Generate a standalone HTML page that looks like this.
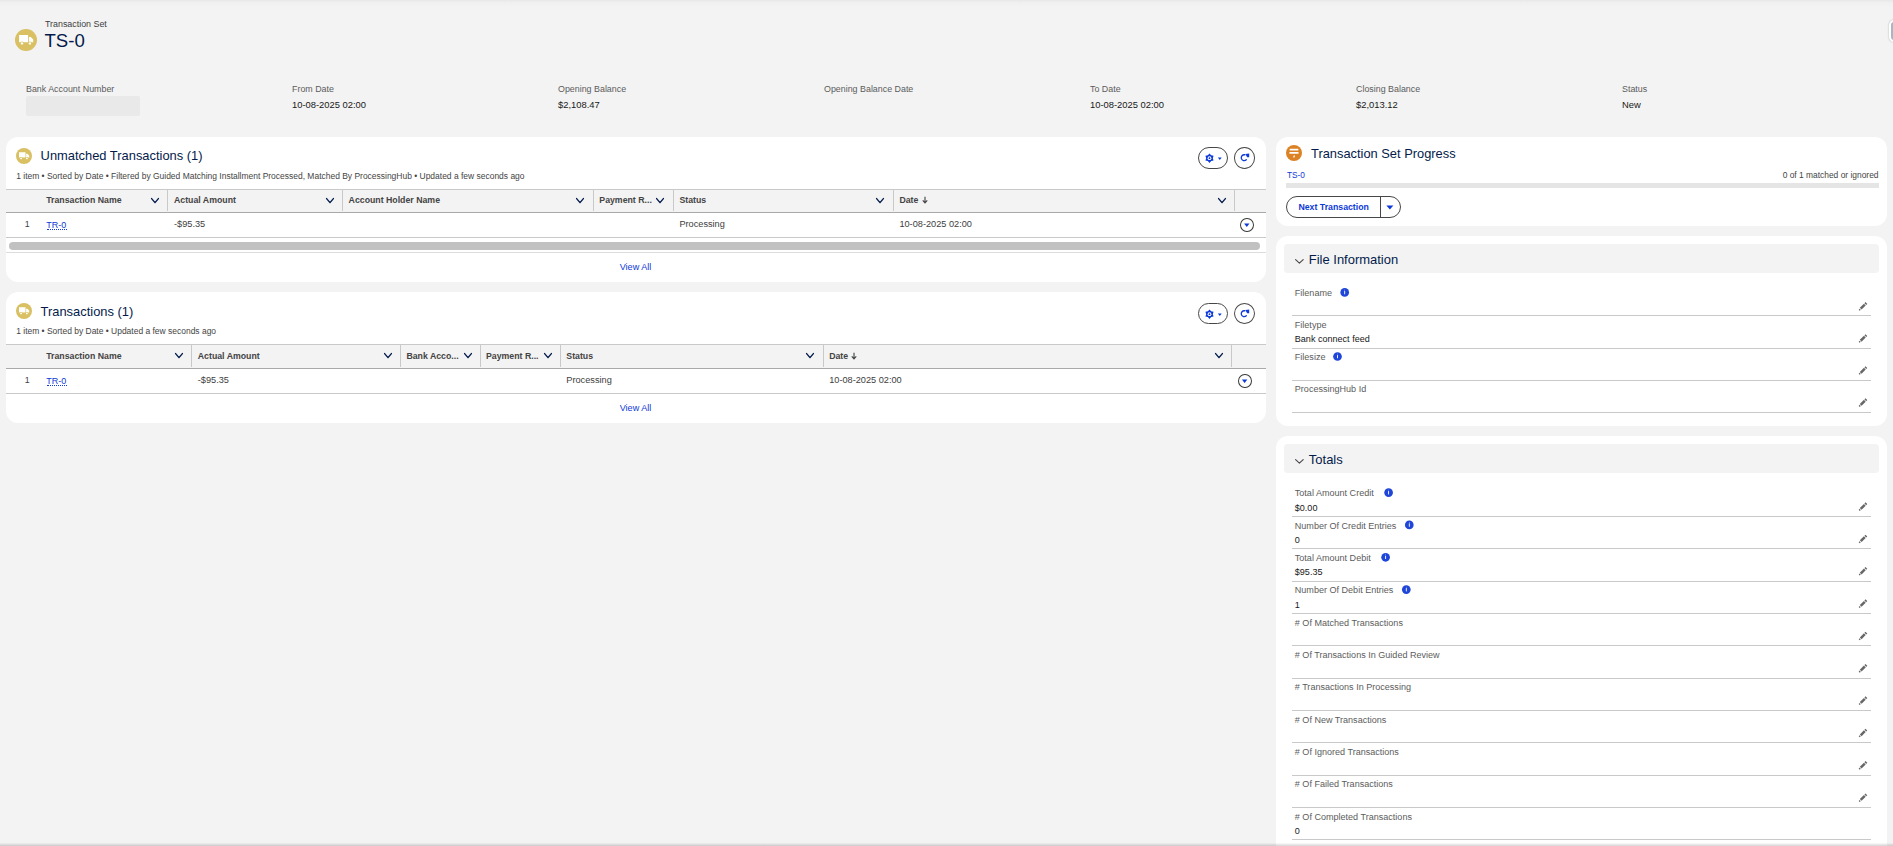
<!DOCTYPE html>
<html><head><meta charset="utf-8"><title>TS-0</title>
<style>
html,body{margin:0;padding:0}
body{width:1893px;height:846px;overflow:hidden;position:relative;background:#f3f3f3;font-family:"Liberation Sans",sans-serif}
.t{position:absolute;white-space:nowrap;line-height:1}
.r{position:absolute;box-sizing:border-box}
svg{overflow:visible}
</style></head><body>
<div class="r" style="left:0px;top:0px;width:1893px;height:8px;background:linear-gradient(#e8e8e8,#f0f0f0 35%,#f3f3f3)"></div>
<div class="r" style="left:1889px;top:20px;width:10px;height:22px;background:#fff;border-radius:5px;box-shadow:0 0 2px rgba(0,0,0,.3)"></div>
<div class="r" style="left:1891px;top:22px;width:10px;height:18px;background:#a3b8c4;border-radius:3px"></div>
<svg viewBox="0 0 22 22" width="22" height="22" style="position:absolute;left:15px;top:29px"><circle cx="11" cy="11" r="11" fill="#d9c062"/><path d="M4.1 6h9v7.2h-9z M13.9 8h1.9l2.4 2.6v2.6h-4.3z" fill="#fff"/><circle cx="7.0" cy="14.4" r="1.9" fill="#d9c062"/><circle cx="14.9" cy="14.4" r="1.9" fill="#d9c062"/><circle cx="7.0" cy="14.4" r="1.2" fill="#fff"/><circle cx="14.9" cy="14.4" r="1.2" fill="#fff"/></svg>
<div class="t" style="left:45.00px;top:20.27px;font-size:8.9px;color:#3e3e3e;font-weight:400;">Transaction Set</div>
<div class="t" style="left:44.50px;top:31.86px;font-size:18.6px;color:#031b4b;font-weight:400;">TS-0</div>
<div class="t" style="left:26.00px;top:85.17px;font-size:8.9px;color:#5c5c5c;font-weight:400;">Bank Account Number</div>
<div class="t" style="left:292.00px;top:85.17px;font-size:8.9px;color:#5c5c5c;font-weight:400;">From Date</div>
<div class="t" style="left:292.00px;top:100.44px;font-size:9.4px;color:#181818;font-weight:400;">10-08-2025 02:00</div>
<div class="t" style="left:558.00px;top:85.17px;font-size:8.9px;color:#5c5c5c;font-weight:400;">Opening Balance</div>
<div class="t" style="left:558.00px;top:100.44px;font-size:9.4px;color:#181818;font-weight:400;">$2,108.47</div>
<div class="t" style="left:824.00px;top:85.17px;font-size:8.9px;color:#5c5c5c;font-weight:400;">Opening Balance Date</div>
<div class="t" style="left:1090.00px;top:85.17px;font-size:8.9px;color:#5c5c5c;font-weight:400;">To Date</div>
<div class="t" style="left:1090.00px;top:100.44px;font-size:9.4px;color:#181818;font-weight:400;">10-08-2025 02:00</div>
<div class="t" style="left:1356.00px;top:85.17px;font-size:8.9px;color:#5c5c5c;font-weight:400;">Closing Balance</div>
<div class="t" style="left:1356.00px;top:100.44px;font-size:9.4px;color:#181818;font-weight:400;">$2,013.12</div>
<div class="t" style="left:1622.00px;top:85.17px;font-size:8.9px;color:#5c5c5c;font-weight:400;">Status</div>
<div class="t" style="left:1622.00px;top:100.44px;font-size:9.4px;color:#181818;font-weight:400;">New</div>
<div class="r" style="left:26px;top:96px;width:114px;height:20px;background:#e9e9e9;border-radius:2px"></div>
<div class="r" style="left:6px;top:137px;width:1260px;height:145px;background:#fff;border-radius:12px"></div>
<svg viewBox="0 0 22 22" width="16" height="16" style="position:absolute;left:16px;top:148px"><circle cx="11" cy="11" r="11" fill="#d9c062"/><path d="M4.1 6h9v7.2h-9z M13.9 8h1.9l2.4 2.6v2.6h-4.3z" fill="#fff"/><circle cx="7.0" cy="14.4" r="1.9" fill="#d9c062"/><circle cx="14.9" cy="14.4" r="1.9" fill="#d9c062"/><circle cx="7.0" cy="14.4" r="1.2" fill="#fff"/><circle cx="14.9" cy="14.4" r="1.2" fill="#fff"/></svg>
<div class="t" style="left:40.60px;top:150.28px;font-size:12.9px;color:#031b4b;font-weight:400;">Unmatched Transactions (1)</div>
<div class="t" style="left:16.20px;top:171.62px;font-size:8.48px;color:#444;font-weight:400;">1 item • Sorted by Date • Filtered by Guided Matching Installment Processed, Matched By ProcessingHub • Updated a few seconds ago</div>
<div class="r" style="left:1198px;top:147px;width:29.7px;height:21.6px;border:0.9px solid #474747;border-radius:11px;background:#fff"></div>
<svg width="1" height="1" style="position:absolute;left:0;top:0"><polygon points="1209.50,153.50 1211.15,155.34 1213.57,155.85 1212.80,158.20 1213.57,160.55 1211.15,161.06 1209.50,162.90 1207.85,161.06 1205.43,160.55 1206.20,158.20 1205.43,155.85 1207.85,155.34" fill="#0d3ad8"/><circle cx="1209.5" cy="158.2" r="1.9" fill="#fff"/><circle cx="1209.5" cy="158.2" r="0.9" fill="#0d3ad8"/></svg>
<svg width="1" height="1" style="position:absolute;left:0;top:0"><path d="M1217.9 157.4 H1221.7 L1219.8 160.1z" fill="#0d3ad8"/></svg>
<div class="r" style="left:1234px;top:147px;width:21px;height:21.6px;border:0.9px solid #474747;border-radius:50%;background:#fff"></div>
<svg width="1" height="1" style="position:absolute;left:0;top:0"><path d="M1244.71 154.79 A2.95 2.95 0 1 0 1246.29 159.79" fill="none" stroke="#0d3ad8" stroke-width="1.35" stroke-linecap="round"/><path d="M1245.30 154.00 L1249.20 153.60 L1249.20 157.30 L1247.20 157.20z" fill="#0d3ad8"/></svg>
<div class="r" style="left:6px;top:189px;width:1260px;height:24px;background:#f3f3f3;border-top:1px solid #c9c9c9;border-bottom:1.3px solid #a9a9a9;box-sizing:border-box"></div>
<div class="r" style="left:167px;top:190px;width:1px;height:21px;background:#c9c9c9"></div>
<div class="r" style="left:342px;top:190px;width:1px;height:21px;background:#c9c9c9"></div>
<div class="r" style="left:593px;top:190px;width:1px;height:21px;background:#c9c9c9"></div>
<div class="r" style="left:673px;top:190px;width:1px;height:21px;background:#c9c9c9"></div>
<div class="r" style="left:893px;top:190px;width:1px;height:21px;background:#c9c9c9"></div>
<div class="r" style="left:1234px;top:190px;width:1px;height:21px;background:#c9c9c9"></div>
<div class="t" style="left:46.20px;top:196.29px;font-size:8.75px;color:#444444;font-weight:700;">Transaction Name</div>
<div class="t" style="left:174.00px;top:196.29px;font-size:8.75px;color:#444444;font-weight:700;">Actual Amount</div>
<div class="t" style="left:348.60px;top:196.29px;font-size:8.75px;color:#444444;font-weight:700;">Account Holder Name</div>
<div class="t" style="left:599.30px;top:196.29px;font-size:8.75px;color:#444444;font-weight:700;">Payment R...</div>
<div class="t" style="left:679.40px;top:196.29px;font-size:8.75px;color:#444444;font-weight:700;">Status</div>
<div class="t" style="left:899.40px;top:196.29px;font-size:8.75px;color:#444444;font-weight:700;">Date</div>
<svg width="10" height="7" style="position:absolute;left:150px;top:196.9px"><path d="M1.6 1.6 L5.0 5.6 L8.4 1.6" fill="none" stroke="#031b4b" stroke-width="1.4" stroke-linecap="round" stroke-linejoin="round"/></svg>
<svg width="10" height="7" style="position:absolute;left:324.8px;top:196.9px"><path d="M1.6 1.6 L5.0 5.6 L8.4 1.6" fill="none" stroke="#031b4b" stroke-width="1.4" stroke-linecap="round" stroke-linejoin="round"/></svg>
<svg width="10" height="7" style="position:absolute;left:575px;top:196.9px"><path d="M1.6 1.6 L5.0 5.6 L8.4 1.6" fill="none" stroke="#031b4b" stroke-width="1.4" stroke-linecap="round" stroke-linejoin="round"/></svg>
<svg width="10" height="7" style="position:absolute;left:655.2px;top:196.9px"><path d="M1.6 1.6 L5.0 5.6 L8.4 1.6" fill="none" stroke="#031b4b" stroke-width="1.4" stroke-linecap="round" stroke-linejoin="round"/></svg>
<svg width="10" height="7" style="position:absolute;left:875px;top:196.9px"><path d="M1.6 1.6 L5.0 5.6 L8.4 1.6" fill="none" stroke="#031b4b" stroke-width="1.4" stroke-linecap="round" stroke-linejoin="round"/></svg>
<svg width="10" height="7" style="position:absolute;left:1216.6px;top:196.9px"><path d="M1.6 1.6 L5.0 5.6 L8.4 1.6" fill="none" stroke="#031b4b" stroke-width="1.4" stroke-linecap="round" stroke-linejoin="round"/></svg>
<div class="r" style="left:6px;top:237px;width:1260px;height:1px;background:#c9c9c9"></div>
<div class="t" style="left:24.70px;top:219.55px;font-size:8.8px;color:#404040;font-weight:400;">1</div>
<div class="t" style="left:46.20px;top:221.28px;font-size:9.0px;color:#0d3ad8;font-weight:400;">TR-0</div>
<div class="r" style="left:46.5px;top:228.8px;width:20px;height:1px;border-top:1px dotted #0d3ad8"></div>
<div class="t" style="left:174.00px;top:220.21px;font-size:9.2px;color:#404040;font-weight:400;">-$95.35</div>
<div class="t" style="left:679.40px;top:220.21px;font-size:9.2px;color:#404040;font-weight:400;">Processing</div>
<div class="t" style="left:899.40px;top:220.21px;font-size:9.2px;color:#404040;font-weight:400;">10-08-2025 02:00</div>
<div class="r" style="left:1240px;top:217.5px;width:13.8px;height:14.2px;border:0.9px solid #3a3a3a;border-radius:50%;background:#fff"></div>
<svg width="1" height="1" style="position:absolute;left:0;top:0"><path d="M1244.1 223.4 H1249.5 L1246.8 227.1z" fill="#0d3ad8"/></svg>
<div class="r" style="left:9px;top:242px;width:1251px;height:8px;background:#c1c1c1;border-radius:4px"></div>
<div class="r" style="left:6px;top:252px;width:1260px;height:1px;background:#dcdcdc"></div>
<div class="t" style="left:619.70px;top:262.70px;font-size:9.1px;color:#0d3ad8;font-weight:400;">View All</div>
<div class="r" style="left:6px;top:292px;width:1260px;height:131px;background:#fff;border-radius:12px"></div>
<svg viewBox="0 0 22 22" width="16" height="16" style="position:absolute;left:16px;top:303px"><circle cx="11" cy="11" r="11" fill="#d9c062"/><path d="M4.1 6h9v7.2h-9z M13.9 8h1.9l2.4 2.6v2.6h-4.3z" fill="#fff"/><circle cx="7.0" cy="14.4" r="1.9" fill="#d9c062"/><circle cx="14.9" cy="14.4" r="1.9" fill="#d9c062"/><circle cx="7.0" cy="14.4" r="1.2" fill="#fff"/><circle cx="14.9" cy="14.4" r="1.2" fill="#fff"/></svg>
<div class="t" style="left:40.60px;top:306.08px;font-size:12.9px;color:#031b4b;font-weight:400;">Transactions (1)</div>
<div class="t" style="left:16.20px;top:326.82px;font-size:8.48px;color:#444;font-weight:400;">1 item • Sorted by Date • Updated a few seconds ago</div>
<div class="r" style="left:1198px;top:303px;width:29.7px;height:20.8px;border:0.9px solid #474747;border-radius:11px;background:#fff"></div>
<svg width="1" height="1" style="position:absolute;left:0;top:0"><polygon points="1209.50,309.50 1211.15,311.34 1213.57,311.85 1212.80,314.20 1213.57,316.55 1211.15,317.06 1209.50,318.90 1207.85,317.06 1205.43,316.55 1206.20,314.20 1205.43,311.85 1207.85,311.34" fill="#0d3ad8"/><circle cx="1209.5" cy="314.2" r="1.9" fill="#fff"/><circle cx="1209.5" cy="314.2" r="0.9" fill="#0d3ad8"/></svg>
<svg width="1" height="1" style="position:absolute;left:0;top:0"><path d="M1217.9 313.4 H1221.7 L1219.8 316.1z" fill="#0d3ad8"/></svg>
<div class="r" style="left:1234px;top:303px;width:21px;height:20.8px;border:0.9px solid #474747;border-radius:50%;background:#fff"></div>
<svg width="1" height="1" style="position:absolute;left:0;top:0"><path d="M1244.71 310.79 A2.95 2.95 0 1 0 1246.29 315.79" fill="none" stroke="#0d3ad8" stroke-width="1.35" stroke-linecap="round"/><path d="M1245.30 310.00 L1249.20 309.60 L1249.20 313.30 L1247.20 313.20z" fill="#0d3ad8"/></svg>
<div class="r" style="left:6px;top:344px;width:1260px;height:25px;background:#f3f3f3;border-top:1px solid #c9c9c9;border-bottom:1.3px solid #a9a9a9;box-sizing:border-box"></div>
<div class="r" style="left:191px;top:345px;width:1px;height:22px;background:#c9c9c9"></div>
<div class="r" style="left:400px;top:345px;width:1px;height:22px;background:#c9c9c9"></div>
<div class="r" style="left:480px;top:345px;width:1px;height:22px;background:#c9c9c9"></div>
<div class="r" style="left:560px;top:345px;width:1px;height:22px;background:#c9c9c9"></div>
<div class="r" style="left:823px;top:345px;width:1px;height:22px;background:#c9c9c9"></div>
<div class="r" style="left:1231px;top:345px;width:1px;height:22px;background:#c9c9c9"></div>
<div class="t" style="left:46.20px;top:351.79px;font-size:8.75px;color:#444444;font-weight:700;">Transaction Name</div>
<div class="t" style="left:197.80px;top:351.79px;font-size:8.75px;color:#444444;font-weight:700;">Actual Amount</div>
<div class="t" style="left:406.40px;top:351.79px;font-size:8.75px;color:#444444;font-weight:700;">Bank Acco...</div>
<div class="t" style="left:486.00px;top:351.79px;font-size:8.75px;color:#444444;font-weight:700;">Payment R...</div>
<div class="t" style="left:566.30px;top:351.79px;font-size:8.75px;color:#444444;font-weight:700;">Status</div>
<div class="t" style="left:829.20px;top:351.79px;font-size:8.75px;color:#444444;font-weight:700;">Date</div>
<svg width="10" height="7" style="position:absolute;left:173.5px;top:352.4px"><path d="M1.6 1.6 L5.0 5.6 L8.4 1.6" fill="none" stroke="#031b4b" stroke-width="1.4" stroke-linecap="round" stroke-linejoin="round"/></svg>
<svg width="10" height="7" style="position:absolute;left:382.5px;top:352.4px"><path d="M1.6 1.6 L5.0 5.6 L8.4 1.6" fill="none" stroke="#031b4b" stroke-width="1.4" stroke-linecap="round" stroke-linejoin="round"/></svg>
<svg width="10" height="7" style="position:absolute;left:462.8px;top:352.4px"><path d="M1.6 1.6 L5.0 5.6 L8.4 1.6" fill="none" stroke="#031b4b" stroke-width="1.4" stroke-linecap="round" stroke-linejoin="round"/></svg>
<svg width="10" height="7" style="position:absolute;left:542.6px;top:352.4px"><path d="M1.6 1.6 L5.0 5.6 L8.4 1.6" fill="none" stroke="#031b4b" stroke-width="1.4" stroke-linecap="round" stroke-linejoin="round"/></svg>
<svg width="10" height="7" style="position:absolute;left:804.5px;top:352.4px"><path d="M1.6 1.6 L5.0 5.6 L8.4 1.6" fill="none" stroke="#031b4b" stroke-width="1.4" stroke-linecap="round" stroke-linejoin="round"/></svg>
<svg width="10" height="7" style="position:absolute;left:1213.5px;top:352.4px"><path d="M1.6 1.6 L5.0 5.6 L8.4 1.6" fill="none" stroke="#031b4b" stroke-width="1.4" stroke-linecap="round" stroke-linejoin="round"/></svg>
<div class="r" style="left:6px;top:393px;width:1260px;height:1px;background:#c9c9c9"></div>
<div class="t" style="left:24.70px;top:375.55px;font-size:8.8px;color:#404040;font-weight:400;">1</div>
<div class="t" style="left:46.20px;top:377.28px;font-size:9.0px;color:#0d3ad8;font-weight:400;">TR-0</div>
<div class="r" style="left:46.5px;top:384.79999999999995px;width:20px;height:1px;border-top:1px dotted #0d3ad8"></div>
<div class="t" style="left:197.80px;top:376.21px;font-size:9.2px;color:#404040;font-weight:400;">-$95.35</div>
<div class="t" style="left:566.30px;top:376.21px;font-size:9.2px;color:#404040;font-weight:400;">Processing</div>
<div class="t" style="left:829.20px;top:376.21px;font-size:9.2px;color:#404040;font-weight:400;">10-08-2025 02:00</div>
<div class="r" style="left:1237.8px;top:373.5px;width:13.8px;height:14.2px;border:0.9px solid #3a3a3a;border-radius:50%;background:#fff"></div>
<svg width="1" height="1" style="position:absolute;left:0;top:0"><path d="M1241.8999999999999 379.4 H1247.3 L1244.6 383.1z" fill="#0d3ad8"/></svg>
<div class="t" style="left:619.70px;top:403.80px;font-size:9.1px;color:#0d3ad8;font-weight:400;">View All</div>
<svg viewBox="0 0 8 10" width="6" height="8" style="position:absolute;left:921.6px;top:196.4px"><path d="M4 0.5 V8.5 M1 5.6 L4 8.8 L7 5.6" fill="none" stroke="#444" stroke-width="1.5"/></svg>
<svg viewBox="0 0 8 10" width="6" height="8" style="position:absolute;left:851.4px;top:352.4px"><path d="M4 0.5 V8.5 M1 5.6 L4 8.8 L7 5.6" fill="none" stroke="#444" stroke-width="1.5"/></svg>
<div class="r" style="left:1276px;top:137px;width:611px;height:89px;background:#fff;border-radius:12px"></div>
<svg viewBox="0 0 16 16" width="16" height="16" style="position:absolute;left:1286px;top:145px"><circle cx="8" cy="8" r="8" fill="#dc8224"/><rect x="3.6" y="3.8" width="8.8" height="1.6" rx="0.5" fill="#fff"/><rect x="3.4" y="7.1" width="9.2" height="1.6" rx="0.5" fill="#fff"/><path d="M7.6 10.6 L9 10.6 L8.5 12.6 L7.2 12.6z" fill="#fff"/></svg>
<div class="t" style="left:1311.00px;top:148.01px;font-size:12.86px;color:#031b4b;font-weight:400;">Transaction Set Progress</div>
<div class="t" style="left:1287.00px;top:170.87px;font-size:8.31px;color:#0d3ad8;font-weight:400;">TS-0</div>
<div class="t" style="left:1782.70px;top:170.97px;font-size:8.42px;color:#444;font-weight:400;">0 of 1 matched or ignored</div>
<div class="r" style="left:1286px;top:183px;width:593px;height:5px;background:#e5e5e5"></div>
<div class="r" style="left:1286px;top:196.2px;width:114.6px;height:21.6px;border:0.9px solid #474747;border-radius:11px;background:#fff"></div>
<div class="r" style="left:1380.4px;top:196.8px;width:0.9px;height:20.6px;background:#474747"></div>
<div class="t" style="left:1298.40px;top:202.68px;font-size:8.76px;color:#0d3ad8;font-weight:700;">Next Transaction</div>
<svg width="8" height="6" style="position:absolute;left:1386.4px;top:204.6px"><path d="M0.4 0.4 H7.4 L3.9 4.6z" fill="#0d3ad8"/></svg>
<div class="r" style="left:1276px;top:236px;width:611px;height:190px;background:#fff;border-radius:12px"></div>
<div class="r" style="left:1284px;top:244px;width:595px;height:29px;background:#f3f3f3;border-radius:4px"></div>
<svg width="10.8" height="6.5" style="position:absolute;left:1294px;top:257.6px"><path d="M1.6 1.6 L5.4 5.1 L9.200000000000001 1.6" fill="none" stroke="#4a4a4a" stroke-width="1.15" stroke-linecap="round" stroke-linejoin="round"/></svg>
<div class="t" style="left:1308.80px;top:253.72px;font-size:12.97px;color:#031b4b;font-weight:400;">File Information</div>
<div class="t" style="left:1294.80px;top:289.04px;font-size:9.05px;color:#5c5c5c;font-weight:400;">Filename</div>
<svg width="1" height="1" style="position:absolute;left:0;top:0"><circle cx="1344.7" cy="292.4" r="4.35" fill="#1f46d8"/><rect x="1344.25" y="290.79999999999995" width="0.9" height="3.4" rx="0.3" fill="#fff"/><circle cx="1344.7" cy="289.9" r="0.45" fill="#fff" opacity="0.7"/></svg>
<div class="r" style="left:1292px;top:315px;width:579px;height:1px;background:#c9c9c9"></div>
<svg width="1" height="1" style="position:absolute;left:0;top:0"><g stroke="#666" stroke-linecap="butt"><path d="M1859.2 310.2 L1860.2 309.2" stroke-width="1.5"/><path d="M1860.7 308.7 L1864.8 304.59999999999997" stroke-width="2.5"/><path d="M1865.3 304.09999999999997 L1866.4 303.0" stroke-width="2.5"/></g></svg>
<div class="t" style="left:1294.80px;top:321.09px;font-size:9.05px;color:#5c5c5c;font-weight:400;">Filetype</div>
<div class="t" style="left:1294.80px;top:334.59px;font-size:9.05px;color:#181818;font-weight:400;">Bank connect feed</div>
<div class="r" style="left:1292px;top:348px;width:579px;height:1px;background:#c9c9c9"></div>
<svg width="1" height="1" style="position:absolute;left:0;top:0"><g stroke="#666" stroke-linecap="butt"><path d="M1859.2 342.25 L1860.2 341.25" stroke-width="1.5"/><path d="M1860.7 340.75 L1864.8 336.65" stroke-width="2.5"/><path d="M1865.3 336.15 L1866.4 335.05" stroke-width="2.5"/></g></svg>
<div class="t" style="left:1294.80px;top:353.14px;font-size:9.05px;color:#5c5c5c;font-weight:400;">Filesize</div>
<svg width="1" height="1" style="position:absolute;left:0;top:0"><circle cx="1337.5" cy="356.5" r="4.35" fill="#1f46d8"/><rect x="1337.05" y="354.9" width="0.9" height="3.4" rx="0.3" fill="#fff"/><circle cx="1337.5" cy="354.0" r="0.45" fill="#fff" opacity="0.7"/></svg>
<div class="r" style="left:1292px;top:380px;width:579px;height:1px;background:#c9c9c9"></div>
<svg width="1" height="1" style="position:absolute;left:0;top:0"><g stroke="#666" stroke-linecap="butt"><path d="M1859.2 374.3 L1860.2 373.3" stroke-width="1.5"/><path d="M1860.7 372.8 L1864.8 368.7" stroke-width="2.5"/><path d="M1865.3 368.2 L1866.4 367.1" stroke-width="2.5"/></g></svg>
<div class="t" style="left:1294.80px;top:385.19px;font-size:9.05px;color:#5c5c5c;font-weight:400;">ProcessingHub Id</div>
<div class="r" style="left:1292px;top:412px;width:579px;height:1px;background:#c9c9c9"></div>
<svg width="1" height="1" style="position:absolute;left:0;top:0"><g stroke="#666" stroke-linecap="butt"><path d="M1859.2 406.34999999999997 L1860.2 405.34999999999997" stroke-width="1.5"/><path d="M1860.7 404.84999999999997 L1864.8 400.74999999999994" stroke-width="2.5"/><path d="M1865.3 400.24999999999994 L1866.4 399.15" stroke-width="2.5"/></g></svg>
<div class="r" style="left:1276px;top:436px;width:611px;height:500px;background:#fff;border-radius:12px"></div>
<div class="r" style="left:1284px;top:444px;width:595px;height:29px;background:#f3f3f3;border-radius:4px"></div>
<svg width="10.8" height="6.5" style="position:absolute;left:1294px;top:457.6px"><path d="M1.6 1.6 L5.4 5.1 L9.200000000000001 1.6" fill="none" stroke="#4a4a4a" stroke-width="1.15" stroke-linecap="round" stroke-linejoin="round"/></svg>
<div class="t" style="left:1308.80px;top:453.30px;font-size:13.0px;color:#031b4b;font-weight:400;">Totals</div>
<div class="t" style="left:1294.80px;top:489.24px;font-size:9.05px;color:#5c5c5c;font-weight:400;">Total Amount Credit</div>
<svg width="1" height="1" style="position:absolute;left:0;top:0"><circle cx="1388.6" cy="492.6" r="4.35" fill="#1f46d8"/><rect x="1388.1499999999999" y="491.0" width="0.9" height="3.4" rx="0.3" fill="#fff"/><circle cx="1388.6" cy="490.1" r="0.45" fill="#fff" opacity="0.7"/></svg>
<div class="t" style="left:1294.80px;top:503.54px;font-size:9.05px;color:#181818;font-weight:400;">$0.00</div>
<div class="r" style="left:1292px;top:516px;width:579px;height:1px;background:#c9c9c9"></div>
<svg width="1" height="1" style="position:absolute;left:0;top:0"><g stroke="#666" stroke-linecap="butt"><path d="M1859.2 510.40000000000003 L1860.2 509.40000000000003" stroke-width="1.5"/><path d="M1860.7 508.90000000000003 L1864.8 504.8" stroke-width="2.5"/><path d="M1865.3 504.3 L1866.4 503.20000000000005" stroke-width="2.5"/></g></svg>
<div class="t" style="left:1294.80px;top:521.58px;font-size:9.05px;color:#5c5c5c;font-weight:400;">Number Of Credit Entries</div>
<svg width="1" height="1" style="position:absolute;left:0;top:0"><circle cx="1409.3" cy="524.94" r="4.35" fill="#1f46d8"/><rect x="1408.85" y="523.34" width="0.9" height="3.4" rx="0.3" fill="#fff"/><circle cx="1409.3" cy="522.44" r="0.45" fill="#fff" opacity="0.7"/></svg>
<div class="t" style="left:1294.80px;top:535.88px;font-size:9.05px;color:#181818;font-weight:400;">0</div>
<div class="r" style="left:1292px;top:548px;width:579px;height:1px;background:#c9c9c9"></div>
<svg width="1" height="1" style="position:absolute;left:0;top:0"><g stroke="#666" stroke-linecap="butt"><path d="M1859.2 542.74 L1860.2 541.74" stroke-width="1.5"/><path d="M1860.7 541.24 L1864.8 537.1400000000001" stroke-width="2.5"/><path d="M1865.3 536.6400000000001 L1866.4 535.5400000000001" stroke-width="2.5"/></g></svg>
<div class="t" style="left:1294.80px;top:553.92px;font-size:9.05px;color:#5c5c5c;font-weight:400;">Total Amount Debit</div>
<svg width="1" height="1" style="position:absolute;left:0;top:0"><circle cx="1385.6" cy="557.28" r="4.35" fill="#1f46d8"/><rect x="1385.1499999999999" y="555.68" width="0.9" height="3.4" rx="0.3" fill="#fff"/><circle cx="1385.6" cy="554.78" r="0.45" fill="#fff" opacity="0.7"/></svg>
<div class="t" style="left:1294.80px;top:568.22px;font-size:9.05px;color:#181818;font-weight:400;">$95.35</div>
<div class="r" style="left:1292px;top:581px;width:579px;height:1px;background:#c9c9c9"></div>
<svg width="1" height="1" style="position:absolute;left:0;top:0"><g stroke="#666" stroke-linecap="butt"><path d="M1859.2 575.0799999999999 L1860.2 574.0799999999999" stroke-width="1.5"/><path d="M1860.7 573.5799999999999 L1864.8 569.48" stroke-width="2.5"/><path d="M1865.3 568.98 L1866.4 567.88" stroke-width="2.5"/></g></svg>
<div class="t" style="left:1294.80px;top:586.26px;font-size:9.05px;color:#5c5c5c;font-weight:400;">Number Of Debit Entries</div>
<svg width="1" height="1" style="position:absolute;left:0;top:0"><circle cx="1406.3" cy="589.62" r="4.35" fill="#1f46d8"/><rect x="1405.85" y="588.02" width="0.9" height="3.4" rx="0.3" fill="#fff"/><circle cx="1406.3" cy="587.12" r="0.45" fill="#fff" opacity="0.7"/></svg>
<div class="t" style="left:1294.80px;top:600.56px;font-size:9.05px;color:#181818;font-weight:400;">1</div>
<div class="r" style="left:1292px;top:613px;width:579px;height:1px;background:#c9c9c9"></div>
<svg width="1" height="1" style="position:absolute;left:0;top:0"><g stroke="#666" stroke-linecap="butt"><path d="M1859.2 607.42 L1860.2 606.42" stroke-width="1.5"/><path d="M1860.7 605.92 L1864.8 601.82" stroke-width="2.5"/><path d="M1865.3 601.32 L1866.4 600.22" stroke-width="2.5"/></g></svg>
<div class="t" style="left:1294.80px;top:618.60px;font-size:9.05px;color:#5c5c5c;font-weight:400;"># Of Matched Transactions</div>
<div class="r" style="left:1292px;top:645px;width:579px;height:1px;background:#c9c9c9"></div>
<svg width="1" height="1" style="position:absolute;left:0;top:0"><g stroke="#666" stroke-linecap="butt"><path d="M1859.2 639.76 L1860.2 638.76" stroke-width="1.5"/><path d="M1860.7 638.26 L1864.8 634.1600000000001" stroke-width="2.5"/><path d="M1865.3 633.6600000000001 L1866.4 632.5600000000001" stroke-width="2.5"/></g></svg>
<div class="t" style="left:1294.80px;top:650.94px;font-size:9.05px;color:#5c5c5c;font-weight:400;"># Of Transactions In Guided Review</div>
<div class="r" style="left:1292px;top:678px;width:579px;height:1px;background:#c9c9c9"></div>
<svg width="1" height="1" style="position:absolute;left:0;top:0"><g stroke="#666" stroke-linecap="butt"><path d="M1859.2 672.1 L1860.2 671.1" stroke-width="1.5"/><path d="M1860.7 670.6 L1864.8 666.5000000000001" stroke-width="2.5"/><path d="M1865.3 666.0000000000001 L1866.4 664.9000000000001" stroke-width="2.5"/></g></svg>
<div class="t" style="left:1294.80px;top:683.28px;font-size:9.05px;color:#5c5c5c;font-weight:400;"># Transactions In Processing</div>
<div class="r" style="left:1292px;top:710px;width:579px;height:1px;background:#c9c9c9"></div>
<svg width="1" height="1" style="position:absolute;left:0;top:0"><g stroke="#666" stroke-linecap="butt"><path d="M1859.2 704.44 L1860.2 703.44" stroke-width="1.5"/><path d="M1860.7 702.94 L1864.8 698.8400000000001" stroke-width="2.5"/><path d="M1865.3 698.3400000000001 L1866.4 697.2400000000001" stroke-width="2.5"/></g></svg>
<div class="t" style="left:1294.80px;top:715.62px;font-size:9.05px;color:#5c5c5c;font-weight:400;"># Of New Transactions</div>
<div class="r" style="left:1292px;top:742px;width:579px;height:1px;background:#c9c9c9"></div>
<svg width="1" height="1" style="position:absolute;left:0;top:0"><g stroke="#666" stroke-linecap="butt"><path d="M1859.2 736.78 L1860.2 735.78" stroke-width="1.5"/><path d="M1860.7 735.28 L1864.8 731.1800000000001" stroke-width="2.5"/><path d="M1865.3 730.6800000000001 L1866.4 729.58" stroke-width="2.5"/></g></svg>
<div class="t" style="left:1294.80px;top:747.96px;font-size:9.05px;color:#5c5c5c;font-weight:400;"># Of Ignored Transactions</div>
<div class="r" style="left:1292px;top:775px;width:579px;height:1px;background:#c9c9c9"></div>
<svg width="1" height="1" style="position:absolute;left:0;top:0"><g stroke="#666" stroke-linecap="butt"><path d="M1859.2 769.12 L1860.2 768.12" stroke-width="1.5"/><path d="M1860.7 767.62 L1864.8 763.5200000000001" stroke-width="2.5"/><path d="M1865.3 763.0200000000001 L1866.4 761.9200000000001" stroke-width="2.5"/></g></svg>
<div class="t" style="left:1294.80px;top:780.30px;font-size:9.05px;color:#5c5c5c;font-weight:400;"># Of Failed Transactions</div>
<div class="r" style="left:1292px;top:807px;width:579px;height:1px;background:#c9c9c9"></div>
<svg width="1" height="1" style="position:absolute;left:0;top:0"><g stroke="#666" stroke-linecap="butt"><path d="M1859.2 801.46 L1860.2 800.46" stroke-width="1.5"/><path d="M1860.7 799.96 L1864.8 795.8600000000001" stroke-width="2.5"/><path d="M1865.3 795.3600000000001 L1866.4 794.2600000000001" stroke-width="2.5"/></g></svg>
<div class="t" style="left:1294.80px;top:812.64px;font-size:9.05px;color:#5c5c5c;font-weight:400;"># Of Completed Transactions</div>
<div class="t" style="left:1294.80px;top:826.94px;font-size:9.05px;color:#181818;font-weight:400;">0</div>
<div class="r" style="left:1292px;top:839px;width:579px;height:1px;background:#c9c9c9"></div>
<div class="r" style="left:0px;top:843px;width:1893px;height:3px;background:linear-gradient(rgba(0,0,0,0.01),rgba(0,0,0,0.17))"></div>
</body></html>
